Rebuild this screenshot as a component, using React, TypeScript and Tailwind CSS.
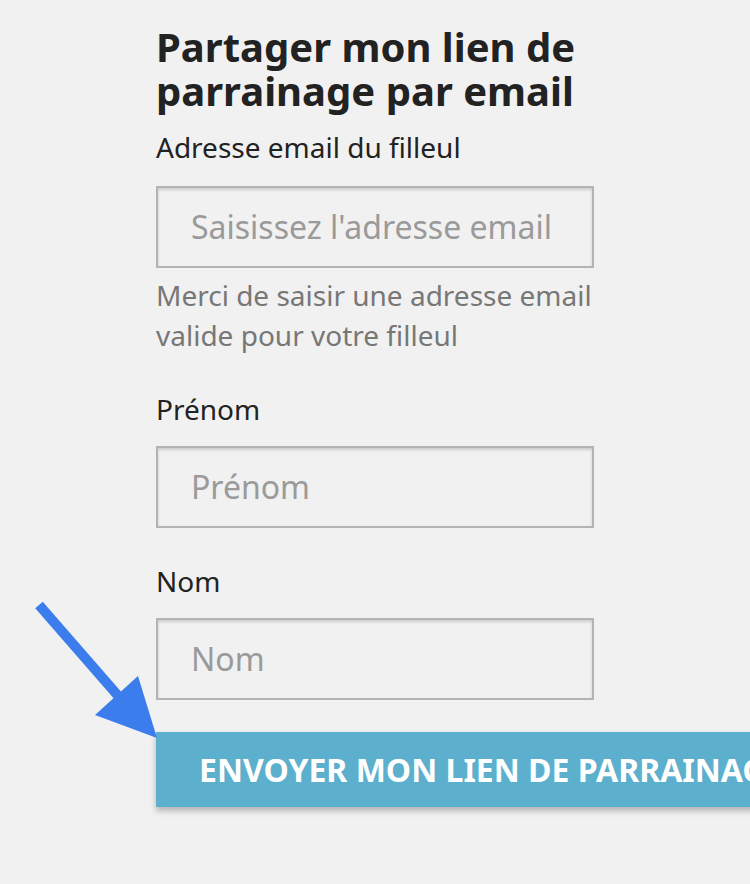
import React from "react";

function Field({ label, placeholder, labelMt, inputMt }: { label: string; placeholder: string; labelMt: string; inputMt: string }) {
  return (
    <>
      <div className={`${labelMt} text-[28px] leading-[32px] text-[#222]`}>{label}</div>
      <div
        className={`${inputMt} w-[438px] h-[82px] border-2 border-[#b3b3b3] shadow-[inset_0_2px_3px_rgba(0,0,0,0.15)] flex items-center pl-[33px] text-[32px] text-[#9a9a9a] whitespace-nowrap`}
      >
        {placeholder}
      </div>
    </>
  );
}

export default function App() {
  return (
    <div
      className="relative w-[750px] h-[884px] overflow-hidden bg-[#f1f1f1]"
      style={{ fontFamily: '"Noto Sans", "Open Sans", sans-serif' }}
    >
      <div className="pl-[156px] pt-[25px] flex flex-col">
        <h1 className="text-[40px] leading-[44px] font-bold text-[#222] whitespace-nowrap">
          Partager mon lien de
          <br />
          parrainage par email
        </h1>
        <Field label="Adresse email du filleul" placeholder="Saisissez l'adresse email" labelMt="mt-[18px]" inputMt="mt-[23px]" />
        <div className="mt-[7px] text-[28px] leading-[40px] text-[#777] whitespace-nowrap">
          Merci de saisir une adresse email
          <br />
          valide pour votre filleul
        </div>
        <Field label="Prénom" placeholder="Prénom" labelMt="mt-[38px]" inputMt="mt-[21px]" />
        <Field label="Nom" placeholder="Nom" labelMt="mt-[37px]" inputMt="mt-[21px]" />
        <div className="mt-[32px] w-[720px] h-[75px] bg-[#5cb0cd] shadow-[0_4px_6px_rgba(0,0,0,0.25)] flex items-center pl-[43px] text-white font-bold text-[32px] whitespace-nowrap">
          ENVOYER MON LIEN DE PARRAINAGE
        </div>
      </div>
      <svg className="absolute left-0 top-0" width="750" height="884" viewBox="0 0 750 884">
        <line x1="39" y1="605" x2="120" y2="698" stroke="#3b7ded" strokeWidth="10" />
        <polygon points="95,715 138,676 157,738" fill="#3b7ded" />
      </svg>
    </div>
  );
}
